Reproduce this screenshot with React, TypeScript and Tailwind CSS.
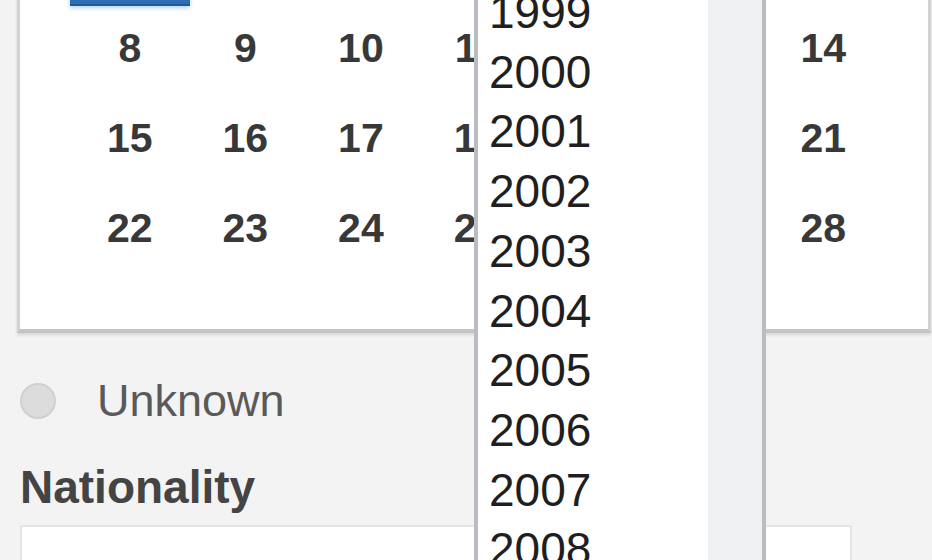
import { clsx } from "clsx"

const weeks: number[][] = [
  [1, 2, 3, 4, 5, 6, 7],
  [8, 9, 10, 11, 12, 13, 14],
  [15, 16, 17, 18, 19, 20, 21],
  [22, 23, 24, 25, 26, 27, 28],
]

const years = Array.from({ length: 12 }, (_, i) => 1999 + i)

export default function App() {
  const selected = 1

  return (
    <div className="relative w-[932px] h-[560px] overflow-hidden bg-[#f3f3f3] font-['Liberation_Sans',Arial,sans-serif]">
      {/* Calendar card, top part scrolled out of view */}
      <div className="ml-[17px] w-[914px] -mt-[96px] bg-white border-x-[3px] border-b-4 border-x-[#d2d2d2] border-b-[#c4c4c4] shadow-[0_2px_3px_rgba(0,0,0,0.12)] pb-[53px]">
        <div className="ml-[52px] w-[809px] grid grid-cols-7">
          {weeks.map((week, wi) =>
            week.map((day) => (
              <div
                key={day}
                className={clsx(
                  "flex justify-center text-[41px] font-bold",
                  wi === 0 ? "h-[102px] items-center" : "h-[90px] leading-[84px]",
                  day === selected
                    ? "-mx-[2px] bg-[#2d6db4] text-white border-b-2 border-[#1f5a9c] shadow-[0_2px_4px_rgba(100,170,230,0.5)]"
                    : "text-[#383838]"
                )}
              >
                {day}
              </div>
            ))
          )}
        </div>
      </div>

      {/* Unknown radio */}
      <div className="mt-[46px] ml-[20px] flex items-center h-[44px] gap-[41px]">
        <span className="w-[36px] h-[36px] rounded-full bg-[#dcdcdc] border-2 border-[#d0d0d0]" />
        <span className="text-[45px] leading-[44px] text-[#5a5a5a]">Unknown</span>
      </div>

      {/* Nationality */}
      <div className="mt-[38px] ml-[20px] text-[46px] leading-[52px] font-bold text-[#444]">Nationality</div>
      <div className="mt-[12px] ml-[20px] w-[832px] h-[60px] bg-white border-2 border-[#e4e4e4]" />

      {/* Year dropdown */}
      <div className="absolute left-[474px] top-[-17px] w-[292px] h-[620px] flex bg-white border-x-4 border-[#b9bcc1]">
        <ul className="w-[230px] pl-[11px]">
          {years.map((y) => (
            <li key={y} className="text-[46px] leading-[59.7px] text-[#1f1f1f]">
              {y}
            </li>
          ))}
        </ul>
        <div className="w-[54px] bg-[#eff0f2]" />
      </div>
    </div>
  )
}
